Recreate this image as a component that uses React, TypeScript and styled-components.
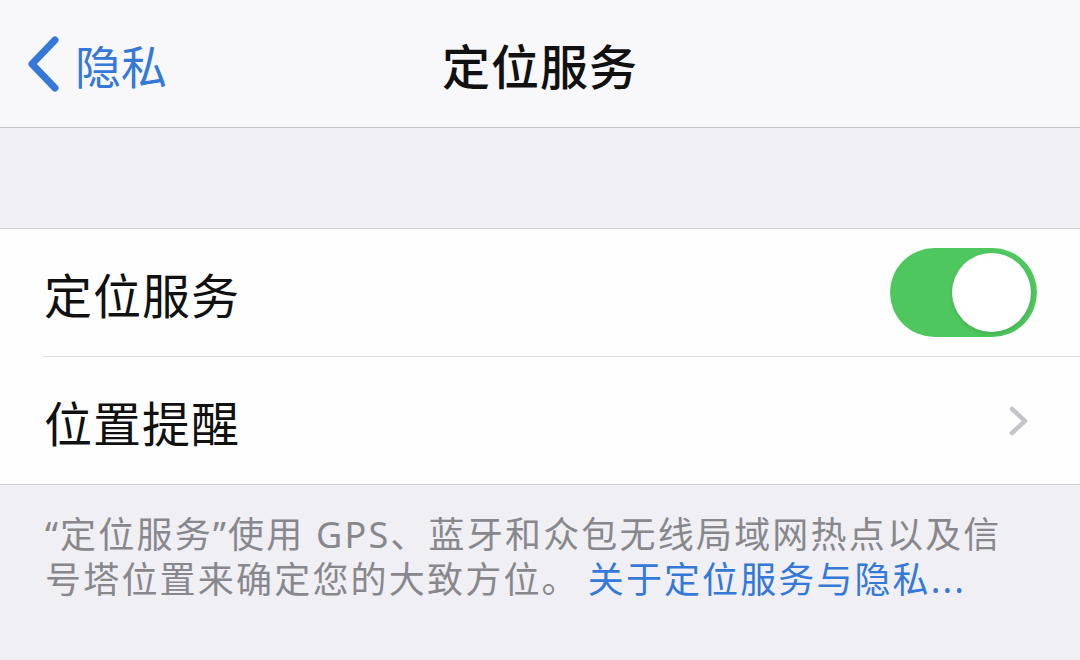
import * as React from 'react'
import styled, { createGlobalStyle } from 'styled-components'

const GlobalStyle = createGlobalStyle`
  html, body {
    margin: 0;
    padding: 0;
    background: #efeff4;
  }
  body {
    font-family: "Noto Sans CJK SC", "Noto Sans", sans-serif;
  }
`

const Screen = styled.div`
  width: 1080px;
  height: 660px;
  overflow: hidden;
  background: #efeff4;
  display: flex;
  flex-direction: column;
`

const NavBar = styled.header`
  height: 127px;
  flex-shrink: 0;
  background: #f8f8fa;
  border-bottom: 1px solid #c6c6c9;
  display: grid;
  grid-template-columns: 1fr auto 1fr;
  align-items: center;
`

const BackButton = styled.div`
  display: flex;
  align-items: center;
  gap: 14px;
  padding-left: 25px;
  color: #3479d8;
  font-size: 46px;
  line-height: 1;
`

const Title = styled.h1`
  margin: 0;
  font-size: 48px;
  font-weight: 500;
  color: #111;
  letter-spacing: 1px;
`

const Spacer = styled.div`
  height: 100px;
  flex-shrink: 0;
`

const Group = styled.section`
  background: #fefefe;
  border-top: 1px solid #cfcfd3;
  border-bottom: 1px solid #cfcfd3;
  padding-left: 43px;
`

const Row = styled.div<{ $divider?: boolean }>`
  height: 127px;
  display: flex;
  align-items: center;
  justify-content: space-between;
  padding-right: 42px;
  border-bottom: ${(p) => (p.$divider ? '1px solid #dcdce0' : 'none')};
`

const RowLabel = styled.span`
  font-size: 48px;
  color: #111;
  padding-left: 1px;
  letter-spacing: 1px;
`

const Switch = styled.div<{ $on: boolean }>`
  width: 147px;
  height: 89px;
  border-radius: 45px;
  background: ${(p) => (p.$on ? '#4ec75e' : '#e5e5ea')};
  position: relative;
  margin-right: 1px;
`

const Knob = styled.div`
  position: absolute;
  top: 5px;
  right: 6px;
  width: 79px;
  height: 79px;
  border-radius: 50%;
  background: #fff;
  box-shadow: 0 2px 4px rgba(0, 0, 0, 0.12);
`

const Chevron = styled.svg`
  margin-right: 8px;
`

const Footer = styled.p`
  margin: 0;
  padding: 27px 40px 0 45px;
  font-family: "Noto Sans", "Noto Sans CJK SC", sans-serif;
  font-size: 36px;
  line-height: 45px;
  letter-spacing: 2.2px;
  color: #88888c;
  white-space: nowrap;
`

const Link = styled.span`
  color: #3479d8;
  margin-left: 8px;
  letter-spacing: 2.1px;
`

const ChevronLeft = () => (
  <svg width="36" height="60" viewBox="0 0 36 60">
    <path
      d="M30 6 L7 30 L30 54"
      fill="none"
      stroke="#3479d8"
      strokeWidth="7"
      strokeLinecap="round"
      strokeLinejoin="round"
    />
  </svg>
)

const ChevronRight = () => (
  <Chevron width="22" height="32" viewBox="0 0 22 32">
    <path
      d="M4 4 L17 16 L4 28"
      fill="none"
      stroke="#c4c4c8"
      strokeWidth="4.5"
      strokeLinecap="round"
      strokeLinejoin="round"
    />
  </Chevron>
)

export default function App() {
  return (
    <Screen>
      <GlobalStyle />
      <NavBar>
        <BackButton>
          <ChevronLeft />
          <span>隐私</span>
        </BackButton>
        <Title>定位服务</Title>
        <div />
      </NavBar>
      <Spacer />
      <Group>
        <Row $divider>
          <RowLabel>定位服务</RowLabel>
          <Switch $on>
            <Knob />
          </Switch>
        </Row>
        <Row>
          <RowLabel>位置提醒</RowLabel>
          <ChevronRight />
        </Row>
      </Group>
      <Footer>
        “定位服务”使用 GPS、蓝牙和众包无线局域网热点以及信
        <br />
        号塔位置来确定您的大致方位。
        <Link>关于定位服务与隐私...</Link>
      </Footer>
    </Screen>
  )
}
